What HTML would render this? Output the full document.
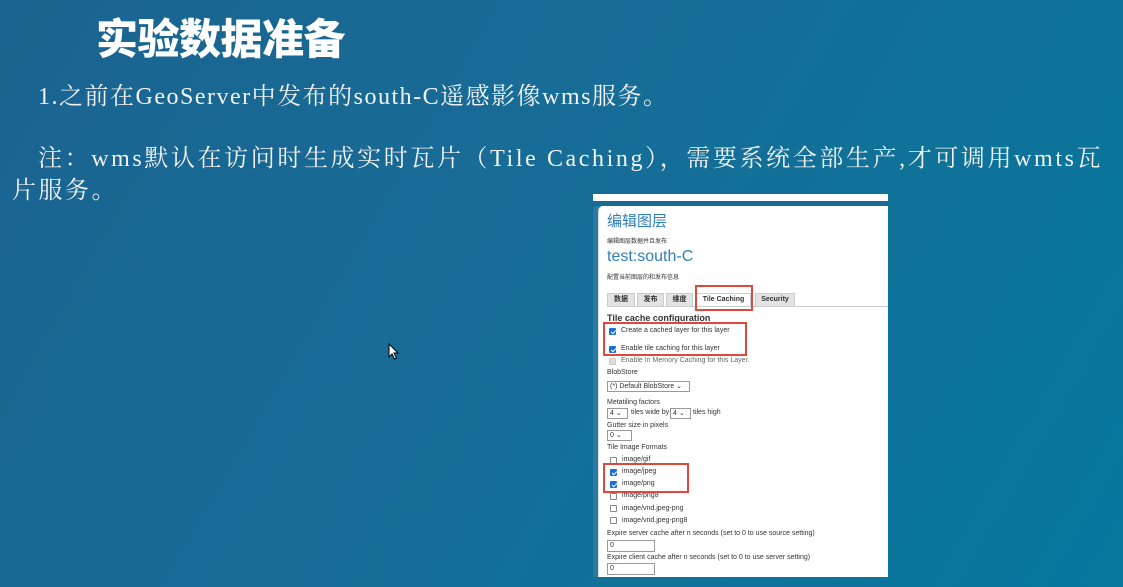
<!DOCTYPE html>
<html><head><meta charset="utf-8"><style>
*{margin:0;padding:0;box-sizing:border-box}
body{width:1123px;height:587px;overflow:hidden;position:relative;background:linear-gradient(120deg,#1b6390 0%,#176d97 45%,#05789c 100%);font-family:"Liberation Serif","Noto Serif CJK SC",serif;color:#f2f2f2}
.a{position:absolute;white-space:nowrap}
.t{font-family:"Liberation Sans","Noto Sans CJK SC",sans-serif;font-weight:900;font-size:42px;color:#fff;left:96px;top:6px;letter-spacing:-0.5px}
.p{font-size:24px}
.s{font-family:"Liberation Sans","Noto Sans CJK SC",sans-serif;color:#333;font-size:7px}
.cb{position:absolute;width:7px;height:7px;border:1px solid #888;border-radius:1px;background:#fff}
.ck{background:#1a6fd6;border-color:#1a6fd6}
.ck:after{content:"";position:absolute;left:1.5px;top:0;width:2px;height:4px;border:solid #fff;border-width:0 1px 1px 0;transform:rotate(45deg)}
.sel{position:absolute;border:1px solid #999;background:#fff;height:11px;font-size:7px;padding-left:2px;line-height:9px}
.red{position:absolute;border:2px solid #e0483e}
.tab{position:absolute;top:293px;height:14px;background:#e3e3e3;border:1px solid #ccc;font-size:7px;font-weight:bold;text-align:center;line-height:12px}
</style></head><body>
<div class="a t">实验数据准备</div>
<div class="a p" style="left:38px;top:76px;letter-spacing:1.5px">1.之前在GeoServer中发布的south-C遥感影像wms服务。</div>
<div class="a p" style="left:38px;top:138px;letter-spacing:2.6px">注：wms默认在访问时生成实时瓦片（Tile Caching），需要系统全部生产,才可调用wmts瓦</div>
<div class="a p" style="left:12px;top:170px;letter-spacing:2.5px">片服务。</div>

<div style="position:absolute;left:593px;top:194px;width:295px;height:7px;background:#fff"></div>
<div style="position:absolute;left:593px;top:201px;width:295px;height:5px;background:#1a6a94"></div>
<div style="position:absolute;left:593px;top:206px;width:295px;height:371px;background:#fff;border-left:8px solid #2b7aa6;border-top-left-radius:4px"></div>
<div style="position:absolute;left:598px;top:206px;width:290px;height:371px;background:#fff;border-top-left-radius:5px;border-left:1px solid #ddd"></div>

<div class="a s" style="left:607px;top:210px;font-size:15px;color:#2f7fbf">编辑图层</div>
<div class="a s" style="left:607px;top:236px;font-size:6px">编辑图层数据并且发布</div>
<div class="a s" style="left:607px;top:248px;font-size:16px;color:#2f7fbf">test:south-C</div>
<div class="a s" style="left:607px;top:272px;font-size:6px">配置当前图层的和发布信息</div>
<div class="s">
<div class="tab" style="left:607px;width:28px">数据</div>
<div class="tab" style="left:637px;width:27px">发布</div>
<div class="tab" style="left:666px;width:27px">维度</div>
<div class="tab" style="left:696px;width:55px;background:#fff;border-bottom-color:#fff">Tile Caching</div>
<div class="tab" style="left:755px;width:40px">Security</div>
</div>
<div style="position:absolute;left:607px;top:306px;width:281px;height:1px;background:#ccc"></div>
<div class="red" style="left:695px;top:285px;width:58px;height:26px"></div>
<div class="a s" style="left:607px;top:313px;font-size:9px;font-weight:bold">Tile cache configuration</div>
<div class="red" style="left:603px;top:322px;width:144px;height:34px"></div>
<div class="cb ck" style="left:609px;top:328px"></div><div class="a s" style="left:621px;top:327px">Create a cached layer for this layer</div>
<div class="cb ck" style="left:609px;top:346px"></div><div class="a s" style="left:621px;top:345px">Enable tile caching for this layer</div>
<div class="cb" style="left:609px;top:358px;background:#ddd;border-color:#ccc"></div><div class="a s" style="left:621px;top:357px;color:#666">Enable In Memory Caching for this Layer.</div>
<div class="a s" style="left:607px;top:369px">BlobStore</div>
<div class="sel s" style="left:607px;top:381px;width:83px">(*) Default BlobStore ⌄</div>
<div class="a s" style="left:607px;top:399px">Metatiling factors</div>
<div class="sel s" style="left:607px;top:408px;width:21px">4 ⌄</div><div class="a s" style="left:631px;top:409px">tiles wide by</div>
<div class="sel s" style="left:670px;top:408px;width:21px">4 ⌄</div><div class="a s" style="left:693px;top:409px">tiles high</div>
<div class="a s" style="left:607px;top:422px">Gutter size in pixels</div>
<div class="sel s" style="left:607px;top:430px;width:25px">0 ⌄</div>
<div class="a s" style="left:607px;top:444px">Tile Image Formats</div>
<div class="cb" style="left:610px;top:457px"></div><div class="a s" style="left:622px;top:456px">image/gif</div>
<div class="cb ck" style="left:610px;top:469px"></div><div class="a s" style="left:622px;top:468px">image/jpeg</div>
<div class="cb ck" style="left:610px;top:481px"></div><div class="a s" style="left:622px;top:480px">image/png</div>
<div class="cb" style="left:610px;top:493px"></div><div class="a s" style="left:622px;top:492px">image/png8</div>
<div class="cb" style="left:610px;top:505px"></div><div class="a s" style="left:622px;top:505px">image/vnd.jpeg-png</div>
<div class="cb" style="left:610px;top:517px"></div><div class="a s" style="left:622px;top:517px">image/vnd.jpeg-png8</div>
<div class="red" style="left:603px;top:463px;width:86px;height:30px"></div>
<div class="a s" style="left:607px;top:530px">Expire server cache after n seconds (set to 0 to use source setting)</div>
<div class="sel s" style="left:607px;top:540px;width:48px;height:12px">0</div>
<div class="a s" style="left:607px;top:554px">Expire client cache after n seconds (set to 0 to use server setting)</div>
<div class="sel s" style="left:607px;top:563px;width:48px;height:12px">0</div>
<svg style="position:absolute;left:388px;top:343px" width="12" height="18"><path d="M1 1 L1 14 L4 11 L6.5 16 L8.5 15 L6 10 L10 10 Z" fill="#fff" stroke="#000" stroke-width="1"/></svg>
</body></html>
